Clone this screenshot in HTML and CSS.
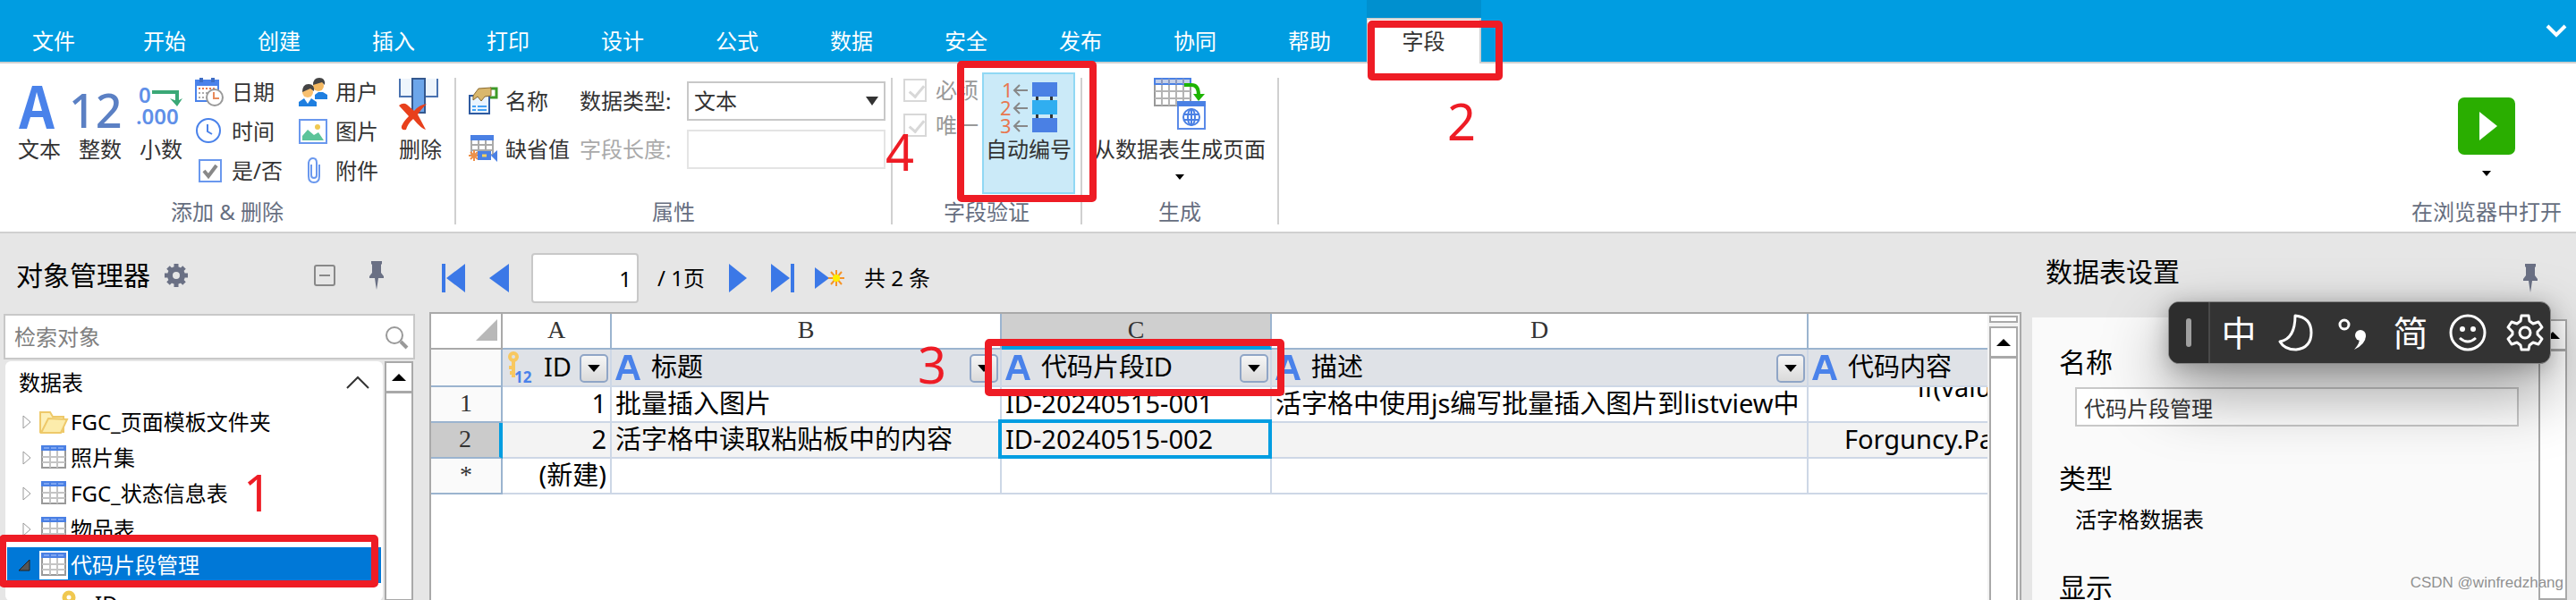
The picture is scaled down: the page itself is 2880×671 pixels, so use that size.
FILE: index.html
```html
<!DOCTYPE html>
<html lang="zh-CN">
<head>
  <meta charset="UTF-8" />
  <title>代码片段管理</title>
  <meta name="viewport" content="width=device-width, initial-scale=1.0" />
  <link rel="stylesheet" href="styles.css">
</head>
<body>
  <!-- Shared icons -->
  <svg class="sprite" aria-hidden="true">
    <symbol id="i-table" viewBox="0 0 32 32">
      <rect width="32" height="32" fill="#fff" />
      <rect x="3" y="3" width="26" height="24" fill="#fff" stroke="#999" stroke-width="2" />
      <path d="M3 15h26M3 21h26M12 8v19M20 8v19" stroke="#c4c4c4" stroke-width="2" />
      <path d="M2 2h28v6H2z" fill="#4a80e4" />
      <path d="M5 4h6v2H5zM13 4h6v2h-6zM21 4h6v2h-6z" fill="#7ea5f0" />
    </symbol>
    <symbol id="i-pin" viewBox="0 0 16 32">
      <path d="M2 0h12v3l-1 1v9l3 4v2h-6l-1 7-1 6-1-6-1-7H0v-2l3-4V4L2 3z" fill="#6a7084" />
    </symbol>
    <symbol id="i-a" viewBox="0 0 28 30">
      <path d="M0 29 10 1h8l10 28h-6l-2-7H8l-2 7zM10 17h8L14 6z" fill="#4a82ea" fill-rule="evenodd" />
    </symbol>
    <symbol id="i-tri" viewBox="0 0 10 18">
      <path d="M1 2v14l8-7z" fill="#fff" stroke="#999" stroke-width="1" />
    </symbol>
    <symbol id="i-up" viewBox="0 0 16 8">
      <path d="M0 8 8 0l8 8z" />
    </symbol>
    <symbol id="i-down" viewBox="0 0 12 7">
      <path d="M0 0h12L6 7z" />
    </symbol>
  </svg>

  <!-- Tab bar -->
  <nav class="tabs">
    <a class="tab file" href="#">文件</a>
    <a class="tab" href="#">开始</a>
    <a class="tab" href="#">创建</a>
    <a class="tab" href="#">插入</a>
    <a class="tab" href="#">打印</a>
    <a class="tab" href="#">设计</a>
    <a class="tab" href="#">公式</a>
    <a class="tab" href="#">数据</a>
    <a class="tab" href="#">安全</a>
    <a class="tab" href="#">发布</a>
    <a class="tab" href="#">协同</a>
    <a class="tab" href="#">帮助</a>
    <a class="tab active" href="#"><span class="tab-face">字段</span><span class="mark mark-tab"></span><span class="num num-tab">2</span></a>
    <button class="collapse" aria-label="折叠">
      <svg width="24" height="16" viewBox="0 0 24 16"><path d="M2 2l10 10L22 2" fill="none" stroke="#fff" stroke-width="4" /></svg>
    </button>
  </nav>

  <!-- Ribbon -->
  <div class="ribbon">
    <section class="group group-add">
      <div class="group-body">
        <div class="bigs">
          <button class="big"><svg class="big-icon" width="48" height="64" viewBox="0 0 48 64"><path d="M1 57 16 9h11l14 48h-9l-4-13H14l-4 13zM16 37h11L21 16z" fill="#4a82ea" fill-rule="evenodd" /></svg>文本</button>
          <button class="big"><svg class="big-icon" width="48" height="64" viewBox="0 0 48 64"><text x="-11" y="56" class="t-int">12</text></svg>整数</button>
          <button class="big"><svg class="big-icon" width="48" height="64" viewBox="0 0 48 64"><text x="-1" y="28" class="t-dec">0</text><text x="-4" y="52" class="t-dec">.000</text><path d="M14 16h28v12" fill="none" stroke="#3aa876" stroke-width="4" /><path d="M34 23l8 3 6-3-6 9z" fill="#3aa876" /></svg>小数</button>
        </div>
        <div class="smalls">
          <button class="small"><svg width="32" height="32" viewBox="0 0 32 32"><path d="M1 3h25v23H1z" fill="#fff" stroke="#4a82ea" stroke-width="2" /><path d="M0 2h27v7H0z" fill="#4a82ea" /><path d="M5 0h4v5H5zM18 0h4v5h-4z" fill="#3d6cc4" /><path d="M4 12h19" stroke="#e8784a" stroke-width="2" stroke-dasharray="2 2" /><path d="M4 17h12M4 22h8" stroke="#aaa" stroke-width="2" stroke-dasharray="2 2" /><circle cx="22" cy="22" r="9" fill="#fff" stroke="#999" stroke-width="2" /><path d="M21 16v7h6" fill="none" stroke="#e88a5a" stroke-width="2" /></svg>日期</button>
          <button class="small"><svg width="32" height="32" viewBox="0 0 32 32"><path d="M0 32v-5l6-4h8l6 4v5z" fill="#1f7fe0" /><path d="M18 24v-5l4-3h5l5 3v5z" fill="#1f7fe0" /><path d="M6 23l4 6 4-6z" fill="#fff" /><circle cx="22" cy="9" r="6" fill="#f4b860" /><path d="M16 8q0-8 7-8t6 8l-3-3z" fill="#444" /><circle cx="10" cy="16" r="6" fill="#f8c070" /><path d="M4 16q0-9 7-9t6 8l-4-3z" fill="#444" /></svg>用户</button>
          <button class="small"><svg width="32" height="32" viewBox="0 0 32 32"><circle cx="15" cy="15" r="13" fill="#fff" stroke="#4a82ea" stroke-width="2" /><path d="M14 8v8l5 3" fill="none" stroke="#4a82ea" stroke-width="2" /></svg>时间</button>
          <button class="small"><svg width="32" height="32" viewBox="0 0 32 32"><rect x="1" y="3" width="30" height="26" fill="#fff" stroke="#6a98ee" stroke-width="2" /><circle cx="21" cy="11" r="3" fill="#f0c850" /><path d="M4 26v-5l6-7 7 6 5-3 6 9z" fill="#5cc49a" /></svg>图片</button>
          <button class="small"><svg width="32" height="32" viewBox="0 0 32 32"><rect x="5" y="4" width="24" height="24" fill="#fff" stroke="#6a98ee" stroke-width="2" /><path d="M10 16l5 6 9-12" fill="none" stroke="#888" stroke-width="4" /></svg>是/否</button>
          <button class="small"><svg width="32" height="32" viewBox="0 0 32 32"><path d="M14 9v12q0 3 3 3t3-3V7q0-5-4-5t-5 5v15q0 7 6 7t6-7V9" fill="none" stroke="#6a98ee" stroke-width="2" /></svg>附件</button>
        </div>
        <button class="big"><svg class="big-icon" width="48" height="64" viewBox="0 0 48 64"><path d="M1 1v20h14V1M29 1v20h14V1" fill="#eef5fc" stroke="#4a72b0" stroke-width="2" /><path d="M15 1h14v38H15z" fill="#6ca6ea" stroke="#34588e" stroke-width="2" /><path d="M0 31q5-4 9-1l8 7q6-7 14-8-6 6-10 12l9 17q-5-1-14-12-6 5-8 12-6 1-5-4 2-5 8-11z" fill="#e8401c" /></svg>删除</button>
      </div>
      <div class="group-label">添加 &amp; 删除</div>
    </section>

    <section class="group group-prop">
      <div class="group-body props">
        <button class="small"><svg width="32" height="32" viewBox="0 0 32 32"><rect x="1" y="10" width="22" height="20" fill="#eaf4ff" stroke="#2e5aa0" stroke-width="2" /><path d="M4 22h4M10 22h10M4 26h4M10 26h10" stroke="#42a0f5" stroke-width="2" /><path d="M24 2h7v10h-7" fill="#fff" stroke="#3d9a28" stroke-width="3" /><path d="M5 10 11 2l14-1v9l-7 1-4 5-4-5-5 4z" fill="#d9b76c" stroke="#8a6a30" stroke-width="1" /></svg>名称</button>
        <label for="type">数据类型:</label>
        <div class="select-wrap">
          <select id="type"><option>文本</option></select>
          <svg class="select-arrow" width="14" height="10" viewBox="0 0 12 7" preserveAspectRatio="none"><use href="#i-down" /></svg>
        </div>
        <button class="small"><svg width="32" height="32" viewBox="0 0 32 32"><path d="M3 1h24v21H3z" fill="#fff" stroke="#aaa" stroke-width="2" /><path d="M3 11h24M3 17h24M11 6v16M19 6v16" stroke="#aaa" stroke-width="2" /><path d="M2 0h26v6H2z" fill="#4a80e4" /><path d="M0 23h12M6 17v12M2 19l8 8M10 19l-8 8" stroke="#ee9048" stroke-width="2" /><path d="M10 18h15v10H10zM25 23l7-6v13z" fill="#4a80e4" /><path d="M15 23h5" stroke="#f4d060" stroke-width="3" /></svg>缺省值</button>
        <label for="length" class="dim">字段长度:</label>
        <input id="length" class="length" type="text" disabled>
      </div>
      <div class="group-label">属性</div>
    </section>

    <section class="group group-check">
      <div class="group-body">
        <div class="checks">
          <label><input type="checkbox" checked disabled>必须</label>
          <label><input type="checkbox" checked disabled>唯一</label>
        </div>
        <button class="big auto">
          <svg width="64" height="58" viewBox="0 0 64 58"><g class="t-seq"><text x="2" y="18">1</text><text x="0" y="38">2</text><text x="0" y="58">3</text></g><path d="M16 10h15M22 4l-6 6 6 6M16 30h15M22 24l-6 6 6 6M16 50h15M22 44l-6 6 6 6" fill="none" stroke="#888" stroke-width="2" /><path d="M40 16h3v6h-3zM56 16h3v6h-3zM40 36h3v6h-3zM56 36h3v6h-3z" fill="#333" /><path d="M36 1h28v16H36zM36 41h28v16H36z" fill="#4a80e4" /><path d="M36 21h28v16H36z" fill="#30aef0" /></svg>
          自动编号
          <span class="mark mark-auto"></span><span class="num num-auto">4</span>
        </button>
      </div>
      <div class="group-label">字段验证</div>
    </section>

    <section class="group group-gen">
      <div class="group-body">
        <button class="big gen">
          <svg class="big-icon" width="58" height="64" viewBox="0 0 58 64"><path d="M1 1h40v30H1z" fill="#fff" stroke="#999" stroke-width="2" /><path d="M1 15h40M1 23h40M9 8v23M17 8v23M25 8v23M33 8v23" stroke="#b4b4b4" stroke-width="2" /><path d="M1 1h40v6H1z" fill="#c4cfe8" stroke="#4a80e4" stroke-width="2" /><path d="M9 1v6M17 1v6M25 1v6M33 1v6" stroke="#8a98c0" stroke-width="2" /><path d="M34 8h8q8 0 8 11" fill="none" stroke="#1db400" stroke-width="4" /><path d="M44 18h13l-7 8z" fill="#1db400" /><rect x="27" y="27" width="30" height="30" fill="#fff" stroke="#5a8ae8" stroke-width="2" /><path d="M26 26h32v6H26z" fill="#4a80e4" /><circle cx="42" cy="44" r="9" fill="none" stroke="#4a80e4" stroke-width="2" /><ellipse cx="42" cy="44" rx="4" ry="9" fill="none" stroke="#4a80e4" stroke-width="2" /><path d="M34 41h16M34 47h16M42 35v18" stroke="#4a80e4" stroke-width="2" /></svg>
          从数据表生成页面
          <svg class="drop" width="10" height="6"><use href="#i-down" /></svg>
        </button>
      </div>
      <div class="group-label">生成</div>
    </section>

    <section class="group run">
      <div class="group-body">
        <button class="run-btn" aria-label="运行">
          <svg width="64" height="64" viewBox="0 0 64 64"><rect width="64" height="64" rx="7" fill="#2aae00" /><path d="M24 16v32l20-16z" fill="#fff" /></svg>
          <svg width="10" height="6"><use href="#i-down" /></svg>
        </button>
      </div>
      <div class="group-label">在浏览器中打开</div>
    </section>
  </div>

  <main class="workspace">
    <!-- Object manager -->
    <aside class="objects">
      <header class="panel-head">
        <h2>对象管理器</h2>
        <svg class="gear" width="26" height="26" viewBox="-13 -13 26 26"><circle r="7" fill="none" stroke="#6a7084" stroke-width="6" /><path d="M0-13v5M0 8v5M-13 0h5M8 0h5M-9-9l3 3M6 6l3 3M-9 9l3-3M6-6l3-3" stroke="#6a7084" stroke-width="5" /></svg>
        <svg class="minus" width="24" height="24" viewBox="0 0 24 24"><rect x="1" y="1" width="22" height="22" rx="2" fill="none" stroke="#888" stroke-width="2" /><path d="M6 12h12" stroke="#888" stroke-width="2" /></svg>
        <svg class="pin" width="16" height="32"><use href="#i-pin" /></svg>
      </header>
      <div class="search">
        <input type="text" placeholder="检索对象" aria-label="检索对象">
        <svg width="26" height="26" viewBox="0 0 26 26"><circle cx="11" cy="11" r="9" fill="none" stroke="#999" stroke-width="2" /><path d="M18 18l7 7" stroke="#999" stroke-width="4" /></svg>
      </div>
      <div class="objects-body">
        <div class="tree">
          <h3>数据表<svg width="26" height="14" viewBox="0 0 26 14"><path d="M1 13 13 1l12 12" fill="none" stroke="#333" stroke-width="2" /></svg></h3>
          <a class="node" href="#"><svg class="exp" width="10" height="18"><use href="#i-tri" /></svg><svg width="32" height="32" viewBox="0 0 32 32"><path d="M1 27V5h11l3 5h12v17z" fill="#fdf0b8" stroke="#eec96a" stroke-width="2" /><path d="M2 28 10 12l21 1-7 15z" fill="#fcecab" stroke="#eec96a" stroke-width="2" /></svg>FGC_页面模板文件夹</a>
          <a class="node" href="#"><svg class="exp" width="10" height="18"><use href="#i-tri" /></svg><svg width="32" height="32"><use href="#i-table" /></svg>照片集</a>
          <a class="node" href="#"><svg class="exp" width="10" height="18"><use href="#i-tri" /></svg><svg width="32" height="32"><use href="#i-table" /></svg>FGC_状态信息表</a>
          <a class="node" href="#"><svg class="exp" width="10" height="18"><use href="#i-tri" /></svg><svg width="32" height="32"><use href="#i-table" /></svg>物品表</a>
          <a class="node selected" href="#"><svg class="exp" width="14" height="14"><path d="M13 1v12H1z" fill="#555" stroke="#222" /></svg><svg width="32" height="32"><use href="#i-table" /></svg>代码片段管理<span class="mark mark-tree"></span><span class="num num-tree">1</span></a>
          <a class="node child" href="#"><svg width="32" height="32" viewBox="0 0 32 32"><circle cx="12" cy="9" r="5" fill="none" stroke="#f0c850" stroke-width="5" /><path d="M12 14v18M12 26h-6" stroke="#f0c850" stroke-width="4" /></svg>ID</a>
        </div>
        <div class="scroll"><button aria-label="向上"><svg width="16" height="8"><use href="#i-up" /></svg></button></div>
      </div>
    </aside>

    <!-- Data grid -->
    <section class="data">
      <div class="pager">
        <button aria-label="第一页"><svg width="26" height="32"><path d="M0 0h4v32H0zM26 0v32L5 16z" fill="#3b78e7" /></svg></button>
        <button aria-label="上一页"><svg width="22" height="32"><path d="M22 0v32L0 16z" fill="#3b78e7" /></svg></button>
        <input type="text" value="1" aria-label="页码">
        <span class="pages">/ 1页</span>
        <button aria-label="下一页"><svg width="20" height="32"><path d="M0 0v32l20-16z" fill="#3b78e7" /></svg></button>
        <button aria-label="最后一页"><svg width="26" height="32"><path d="M22 0h4v32h-4zM0 0v32l21-16z" fill="#3b78e7" /></svg></button>
        <button aria-label="新建"><svg width="34" height="26" viewBox="0 0 34 26"><path d="M0 1v24l16-12z" fill="#3b78e7" /><path d="M24 4v18M15 13h18M18 6l12 14M30 6L18 20" stroke="#f59428" stroke-width="2" /><circle cx="24" cy="13" r="4" fill="#ffee00" /></svg></button>
        <span>共 2 条</span>
      </div>
      <div class="sheet">
        <div class="sheet-main">
          <table>
            <colgroup><col class="c-row"><col class="c-a"><col class="c-b"><col class="c-c"><col class="c-d"><col></colgroup>
            <thead>
              <tr class="letters">
                <th><svg class="corner" width="24" height="24"><path d="M24 0v24H0z" fill="#b8b8b8" /></svg></th>
                <th>A</th><th>B</th><th class="picked">C</th><th>D</th><th></th>
              </tr>
              <tr class="fields">
                <th></th>
                <th><div class="field"><svg class="key" width="28" height="36" viewBox="0 0 28 36"><circle cx="8" cy="6" r="4" fill="none" stroke="#f8c860" stroke-width="4" /><path d="M8 10v19M8 18H3M8 24H4" stroke="#f8c860" stroke-width="4" /><text x="9" y="35" class="t-key">12</text></svg><span>ID</span><button aria-label="筛选"><svg width="14" height="8" viewBox="0 0 12 7"><use href="#i-down" /></svg></button></div></th>
                <th><div class="field"><svg class="a" width="28" height="30"><use href="#i-a" /></svg><span>标题</span><button aria-label="筛选"><svg width="14" height="8" viewBox="0 0 12 7"><use href="#i-down" /></svg></button></div></th>
                <th><div class="field"><svg class="a" width="28" height="30"><use href="#i-a" /></svg><span>代码片段ID</span><button aria-label="筛选"><svg width="14" height="8" viewBox="0 0 12 7"><use href="#i-down" /></svg></button></div><span class="mark mark-col"></span><span class="num num-col">3</span></th>
                <th><div class="field"><svg class="a" width="28" height="30"><use href="#i-a" /></svg><span>描述</span><button aria-label="筛选"><svg width="14" height="8" viewBox="0 0 12 7"><use href="#i-down" /></svg></button></div></th>
                <th><div class="field"><svg class="a" width="28" height="30"><use href="#i-a" /></svg><span>代码内容</span></div></th>
              </tr>
            </thead>
            <tbody>
              <tr>
                <th>1</th><td class="right">1</td><td>批量插入图片</td><td>ID-20240515-001</td><td>活字格中使用js编写批量插入图片到listview中</td><td><div class="code scrolled">if(valu</div></td>
              </tr>
              <tr class="current">
                <th>2</th><td class="right">2</td><td>活字格中读取粘贴板中的内容</td><td class="cursor">ID-20240515-002</td><td></td><td><div class="code">Forguncy.Pa</div></td>
              </tr>
              <tr>
                <th>*</th><td class="right">(新建)</td><td></td><td></td><td></td><td></td>
              </tr>
            </tbody>
          </table>
        </div>
        <div class="sheet-side">
          <div class="splitter"></div>
          <div class="scroll"><button aria-label="向上"><svg width="16" height="8"><use href="#i-up" /></svg></button></div>
        </div>
      </div>
    </section>

    <!-- Table settings -->
    <aside class="settings">
      <header class="panel-head">
        <h2>数据表设置</h2>
        <svg class="pin" width="16" height="32"><use href="#i-pin" /></svg>
      </header>
      <div class="settings-body">
        <div class="form">
          <label class="name" for="name">名称</label>
          <input id="name" type="text" value="代码片段管理">
          <h4>类型</h4>
          <p>活字格数据表</p>
          <h4>显示</h4>
        </div>
        <div class="scroll"><button aria-label="向上"><svg width="16" height="8"><use href="#i-up" /></svg></button></div>
      </div>

      <!-- Floating input method bar -->
      <div class="ime">
        <span class="grip"></span>
        <button>中</button>
        <button aria-label="月"><svg width="40" height="42" viewBox="0 0 40 42"><path d="M19 2q18 2 18 19T20 40Q7 40 2 31 19 28 19 2z" fill="none" stroke="#fff" stroke-width="3" stroke-linejoin="round" /></svg></button>
        <button aria-label="标点"><svg width="36" height="42" viewBox="0 0 36 42"><circle cx="8" cy="12" r="5" fill="none" stroke="#fff" stroke-width="3" /><circle cx="26" cy="24" r="6" fill="#fff" /><path d="M32 24q0 10-13 16 7-8 6-14z" fill="#fff" /></svg></button>
        <button>简</button>
        <button aria-label="表情"><svg width="42" height="42" viewBox="0 0 42 42"><circle cx="21" cy="21" r="19" fill="none" stroke="#fff" stroke-width="3" /><circle cx="15" cy="17" r="3" fill="#fff" /><circle cx="27" cy="17" r="3" fill="#fff" /><path d="M12 27q9 8 18 0" fill="none" stroke="#fff" stroke-width="3" /></svg></button>
        <button aria-label="设置"><svg width="42" height="42" viewBox="0 0 42 42"><path d="M17 2h8l1 6 4 3 6-2 4 6-5 5v3l5 5-4 6-6-2-4 3-1 5h-8l-1-5-4-3-6 2-4-6 5-5v-3l-5-5 4-6 6 2 4-3z" fill="none" stroke="#fff" stroke-width="3" stroke-linejoin="round" /><circle cx="21" cy="21" r="6" fill="none" stroke="#fff" stroke-width="3" /></svg></button>
      </div>
      <span class="watermark">CSDN @winfredzhang</span>
    </aside>
  </main>
</body>
</html>
```

FILE: styles.css
```css
* {
  box-sizing: border-box;
}

body {
  margin: 0;
  height: 100vh;
  overflow: hidden;
  display: flex;
  flex-direction: column;
  background: #e6e6e6;
  color: #000;
  font-family: "Noto Sans", "Noto Sans CJK SC", sans-serif;
  font-size: 24px;
  line-height: 32px;
}

button,
input,
select {
  font: inherit;
  color: inherit;
  margin: 0;
  padding: 0;
  border: 0;
  background: none;
}

a {
  color: inherit;
  text-decoration: none;
}

h2,
h3,
h4,
p {
  margin: 0;
  font-weight: 400;
}

svg {
  display: block;
  flex: none;
  overflow: visible;
}

.sprite {
  position: absolute;
  width: 0;
  height: 0;
}

/* Red call-outs drawn over the window */
.mark {
  position: absolute;
  border: 8px solid #ee1c25;
  border-radius: 5px;
  z-index: 5;
  pointer-events: none;
}

.num {
  position: absolute;
  color: #ee1c25;
  font-size: 56px;
  line-height: 56px;
  font-weight: 400;
  z-index: 5;
}

.mark-tab { inset: 23px -24px -19px 1px; }
.num-tab { left: 90px; top: 107px; }
.mark-auto { inset: -15px -26px -11px -30px; }
.num-auto { left: -110px; top: 58px; }
.mark-tree { inset: -14px 3px -5px -9px; }
.num-tree { left: 264px; top: -90px; }
.mark-col { inset: -12px -16px -12px -19px; }
.num-col { left: -94px; top: -12px; }

/* Tab bar */
.tabs {
  display: flex;
  flex: none;
  height: 71px;
  background: #009de1;
  border-bottom: 2px solid #d0d0d0;
}

.tab {
  position: relative;
  width: 128px;
  padding-top: 30px;
  color: #fff;
  text-align: center;
}

.tab.file {
  width: 120px;
}

.tab.active {
  height: 71px;
  padding-top: 20px;
  background: #0090cf;
  color: #333;
}

.tab-face {
  display: block;
  height: 51px;
  padding-top: 8px;
  background: #fff;
  border: 2px solid #d0d0d0;
  border-width: 2px 2px 0 1px;
}

.collapse {
  margin-left: auto;
  margin-right: 10px;
}

/* Ribbon */
.ribbon {
  display: flex;
  flex: none;
  padding: 16px 0 8px;
  background: #fff;
  border-bottom: 2px solid #d0d0d0;
  color: #333;
}

.group {
  display: flex;
  flex-direction: column;
  height: 164px;
  border-right: 2px solid #d0d0d0;
}

.group-body {
  display: flex;
  align-items: flex-start;
  flex: 1;
}

.group-label {
  line-height: 28px;
  text-align: center;
  color: #666e80;
}

.group-add {
  width: 510px;
  padding-left: 20px;
}

.group-add .group-label {
  padding-right: 20px;
}

.bigs {
  display: flex;
  gap: 20px;
  margin-right: 14px;
}

.big {
  position: relative;
  display: flex;
  flex-direction: column;
  align-items: center;
  line-height: 32px;
  white-space: nowrap;
}

.t-int {
  font-size: 52px;
  font-weight: 500;
  fill: #5b80c4;
}

.t-dec {
  font-size: 24px;
  font-weight: 600;
  fill: #5f8fe8;
}

.t-seq {
  font-size: 22px;
  fill: #e87850;
}

.t-key {
  font-size: 17px;
  font-weight: 700;
  fill: #4a82ea;
}

.smalls {
  display: grid;
  grid-template-columns: 116px 112px;
  grid-auto-rows: 44px;
  margin-top: -6px;
}

.small {
  display: flex;
  align-items: center;
  gap: 9px;
  white-space: nowrap;
}

.group-prop {
  width: 488px;
}

.props {
  display: grid;
  grid-template-columns: 124px 120px 222px;
  grid-template-rows: 44px 44px;
  gap: 10px 0;
  align-items: center;
  padding: 4px 0 0 14px;
}

.dim {
  color: #aaa;
}

.select-wrap {
  position: relative;
}

.select-wrap select,
.length {
  display: block;
  width: 100%;
  height: 44px;
  padding: 0 6px;
  border: 2px solid #c8c8c8;
  background: #fff;
  appearance: none;
}

.length {
  border-color: #e4e4e4;
}

.select-arrow {
  position: absolute;
  right: 8px;
  top: 17px;
  fill: #333;
  pointer-events: none;
}

.group-check {
  width: 212px;
  padding-left: 12px;
}

.group-check .group-label {
  padding-right: 12px;
}

.checks {
  width: 88px;
  margin-top: -6px;
  color: #999;
}

.checks label {
  display: flex;
  align-items: center;
  gap: 10px;
  height: 39px;
  white-space: nowrap;
}

.checks input {
  position: relative;
  flex: none;
  width: 26px;
  height: 26px;
  border: 2px solid #d8d8d8;
  appearance: none;
}

.checks input::after {
  content: "";
  position: absolute;
  left: 8px;
  top: 2px;
  width: 7px;
  height: 14px;
  border: solid #d8d8d8;
  border-width: 0 3px 3px 0;
  transform: rotate(40deg);
}

.auto {
  width: 104px;
  height: 136px;
  margin-top: -6px;
  padding-top: 8px;
  background: #cbeaf8;
  border: 2px solid #90d8f4;
}

.auto > svg {
  margin-bottom: 2px;
}

.group-gen {
  width: 220px;
}

.gen {
  width: 100%;
}

.drop {
  margin-top: 12px;
}

.run {
  margin-left: auto;
  margin-right: 16px;
  border-right: 0;
}

.run .group-body {
  justify-content: center;
}

.run-btn {
  display: flex;
  flex-direction: column;
  align-items: center;
  gap: 18px;
  padding-top: 22px;
  color: #000;
}

/* Workspace */
.workspace {
  display: grid;
  grid-template-columns: 480px 1fr 620px;
  flex: 1;
  min-height: 0;
}

.panel-head {
  display: flex;
  align-items: center;
}

.panel-head h2 {
  font-size: 30px;
  line-height: 40px;
}

.objects {
  padding: 0 16px 0 4px;
}

.objects .panel-head {
  height: 90px;
  padding: 4px 35px 0 14px;
}

.gear {
  margin-left: 16px;
}

.minus {
  margin-left: auto;
  margin-right: 38px;
}

.search {
  display: flex;
  align-items: center;
  height: 51px;
  padding: 0 6px 0 10px;
  background: #fff;
  border: 2px solid #c8c8c8;
}

.search input {
  flex: 1;
}

.search input::placeholder {
  color: #808080;
}

.objects-body {
  display: flex;
  justify-content: space-between;
  height: 270px;
  padding: 2px 2px 0;
}

.tree {
  width: 422px;
  background: #fff;
  border-radius: 6px;
}

.tree h3 {
  display: flex;
  align-items: center;
  justify-content: space-between;
  height: 48px;
  padding: 0 15px;
  font-size: 24px;
}

.node {
  position: relative;
  display: flex;
  align-items: center;
  height: 40px;
  margin: 0 2px;
  padding-left: 17px;
  gap: 3px;
  white-space: nowrap;
}

.node .exp {
  margin-right: 6px;
}

.node.selected {
  padding-left: 12px;
  background: #0078d7;
  color: #fff;
}

.node.selected .exp {
  margin-right: 7px;
}

.node.child {
  padding: 6px 0 0 57px;
  gap: 9px;
}

.scroll {
  width: 32px;
  background: #fff;
  border: 2px solid #a9a9a9;
}

.scroll button {
  display: flex;
  align-items: center;
  justify-content: center;
  width: 100%;
  height: 34px;
  border-bottom: 3px solid #a9a9a9;
}

/* Data grid */
.data {
  display: flex;
  flex-direction: column;
  min-width: 0;
}

.pager {
  display: flex;
  align-items: center;
  height: 88px;
  padding: 12px 0 0 14px;
  gap: 27px;
}

.pager input {
  width: 120px;
  height: 56px;
  margin: 0 -6px 0 -2px;
  padding: 0 6px;
  text-align: right;
  background: #fff;
  border: 2px solid #c8c8c8;
  border-radius: 4px;
}

.pager button:last-of-type {
  margin: 0 -6px 0 -4px;
}

.sheet {
  display: flex;
  flex: 1;
  min-height: 0;
  background: #fff;
  border: 2px solid #a9a9a9;
  border-bottom: 0;
}

.sheet-main {
  flex: 1;
  min-width: 0;
}

table {
  width: 100%;
  table-layout: fixed;
  border-spacing: 0;
  font-size: 29px;
}

.c-row { width: 80px; }
.c-a { width: 122px; }
.c-b { width: 436px; }
.c-c { width: 302px; }
.c-d { width: 600px; }

th,
td {
  position: relative;
  height: 40px;
  padding: 0 4px 2px;
  border: solid #cdd7e6;
  border-width: 0 2px 2px 0;
  line-height: 36px;
  text-align: left;
  font-weight: 400;
  white-space: nowrap;
}

th:last-child,
td:last-child {
  border-right: 0;
}

.letters th,
tbody th {
  font-family: "Liberation Serif", serif;
  font-size: 28px;
  text-align: center;
  color: #333;
  border-color: #9bb4cf;
}

.letters th.picked {
  padding-bottom: 0;
  background: #cfcfcf;
  border-bottom: 4px solid #009de1;
}

.letters th:first-child {
  border-color: #a9a9a9;
}

.corner {
  margin-left: auto;
}

.fields th {
  height: 42px;
  padding-bottom: 0;
  background: #dfe2e7;
}

.fields th:first-child {
  border-color: #9bb4cf;
}

.fields th:first-child,
tbody th {
  background: #fafafa;
}

.field {
  display: flex;
  align-items: center;
  height: 40px;
}

.field span {
  padding-bottom: 2px;
}

.field .a {
  margin-right: 12px;
}

.field .key {
  margin-right: 14px;
}

.field button {
  display: flex;
  align-items: center;
  justify-content: center;
  width: 32px;
  height: 32px;
  margin: 2px -2px 0 auto;
  background: linear-gradient(#f6f6f6, #dadada);
  border: 2px solid #8fa5c6;
  border-radius: 5px;
}

.current td {
  background: #f3f3f3;
}

tbody .current th {
  background: #cbcbcb;
  border-right: 4px solid #009de1;
}

.right {
  text-align: right;
}

.cursor::after {
  content: "";
  position: absolute;
  inset: -4px -2px -2px -4px;
  border: 4px solid #009de1;
}

.code {
  height: 36px;
  margin-right: -4px;
  padding-left: 36px;
  overflow: hidden;
}

.scrolled {
  padding-left: 118px;
  line-height: 0;
}

.sheet-side {
  display: flex;
  flex-direction: column;
  gap: 4px;
  width: 36px;
  padding: 2px 2px 0;
  background: #f3f3f3;
}

.splitter {
  height: 8px;
  background: #fff;
  border: 2px solid #a9a9a9;
}

.sheet-side .scroll {
  flex: 1;
  border-bottom: 0;
}

/* Settings */
.settings {
  position: relative;
  padding-left: 12px;
}

.settings .panel-head {
  height: 94px;
  padding: 6px 43px 14px 15px;
  justify-content: space-between;
}

.settings .pin {
  margin-top: 14px;
}

.settings-body {
  display: flex;
  height: 316px;
}

.form {
  flex: 1;
  padding: 30px 22px 0 30px;
  background: #fafafa;
}

.form .name,
.form h4 {
  display: block;
  font-size: 30px;
  line-height: 40px;
}

.form input {
  display: block;
  width: calc(100% - 18px);
  height: 44px;
  margin: 8px 0 38px 18px;
  padding: 0 8px;
  color: #333;
  background: #fff;
  border: 2px solid #c8c8c8;
}

.form p {
  margin: 10px 0 40px 18px;
}

.settings .scroll {
  margin: 2px 10px 0 0;
}

.ime {
  position: absolute;
  right: 28px;
  top: 76px;
  display: flex;
  align-items: center;
  width: 428px;
  height: 70px;
  background: #333;
  border: 1px solid #888;
  border-radius: 12px;
  box-shadow: 0 32px 72px rgba(0, 0, 0, 0.4), 0 4px 24px rgba(0, 0, 0, 0.25);
  color: #fff;
  font-size: 39px;
  z-index: 6;
}

.ime button {
  display: flex;
  flex: none;
  align-items: center;
  justify-content: center;
  width: 64px;
}

.grip {
  display: flex;
  flex: none;
  align-items: center;
  justify-content: center;
  align-self: stretch;
  width: 46px;
  border-right: 2px solid #4a4a4a;
  background: #2d2d2d;
  border-radius: 11px 0 0 11px;
}

.grip::before {
  content: "";
  width: 6px;
  height: 32px;
  border-radius: 3px;
  background: #a0a0a0;
}

.watermark {
  position: absolute;
  right: 14px;
  bottom: 8px;
  font-family: "Liberation Sans", sans-serif;
  font-size: 17px;
  line-height: 24px;
  color: #909090;
  text-shadow: 1px 1px 0 #fff;
}
```
